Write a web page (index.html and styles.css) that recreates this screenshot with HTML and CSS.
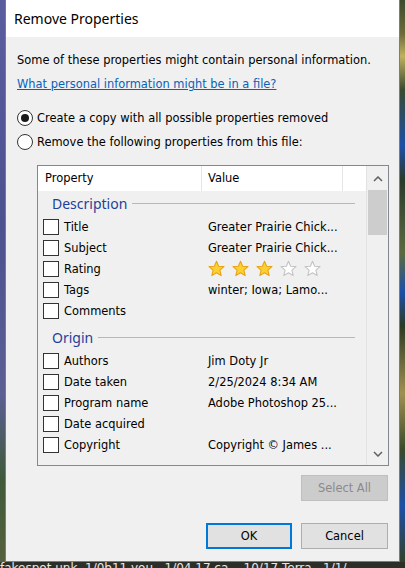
FILE: index.html
```html
<!DOCTYPE html>
<html>
<head>
  <meta charset="UTF-8">
  <title>Remove Properties</title>
  <link rel="stylesheet" href="styles.css">
</head>
<body>
  <div class="screen">
    <div class="edge-left"></div>
    <div class="dialog">
      <div class="titlebar">Remove Properties</div>
      <div class="content">
        <p class="intro">Some of these properties might contain personal information.</p>
        <a class="link" href="#">What personal information might be in a file?</a>

        <div class="options">
          <label class="radio"><span class="dot checked"></span>Create a copy with all possible properties removed</label>
          <label class="radio"><span class="dot"></span>Remove the following properties from this file:</label>
        </div>

        <div class="listbox">
          <div class="list-main">
            <div class="list-head">
              <div class="col-prop">Property</div>
              <div class="col-val">Value</div>
              <div class="col-end"></div>
            </div>
            <div class="list-body">
              <div class="group"><span>Description</span><i></i></div>
              <div class="row"><span class="box"></span><span class="name">Title</span><span class="val">Greater Prairie Chick...</span></div>
              <div class="row"><span class="box"></span><span class="name">Subject</span><span class="val">Greater Prairie Chick...</span></div>
              <div class="row"><span class="box"></span><span class="name">Rating</span>
                <span class="val stars">
                  <svg viewBox="0 0 20 20" class="star on"><polygon points="10,1.5 12.5,7.3 18.8,7.8 14,12 15.5,18.3 10,15 4.5,18.3 6,12 1.2,7.8 7.5,7.3"/></svg>
                  <svg viewBox="0 0 20 20" class="star on"><polygon points="10,1.5 12.5,7.3 18.8,7.8 14,12 15.5,18.3 10,15 4.5,18.3 6,12 1.2,7.8 7.5,7.3"/></svg>
                  <svg viewBox="0 0 20 20" class="star on"><polygon points="10,1.5 12.5,7.3 18.8,7.8 14,12 15.5,18.3 10,15 4.5,18.3 6,12 1.2,7.8 7.5,7.3"/></svg>
                  <svg viewBox="0 0 20 20" class="star"><polygon points="10,1.5 12.5,7.3 18.8,7.8 14,12 15.5,18.3 10,15 4.5,18.3 6,12 1.2,7.8 7.5,7.3"/></svg>
                  <svg viewBox="0 0 20 20" class="star"><polygon points="10,1.5 12.5,7.3 18.8,7.8 14,12 15.5,18.3 10,15 4.5,18.3 6,12 1.2,7.8 7.5,7.3"/></svg>
                </span>
              </div>
              <div class="row"><span class="box"></span><span class="name">Tags</span><span class="val">winter; Iowa; Lamo...</span></div>
              <div class="row"><span class="box"></span><span class="name">Comments</span><span class="val"></span></div>
              <div class="group gap"><span>Origin</span><i></i></div>
              <div class="row"><span class="box"></span><span class="name">Authors</span><span class="val">Jim Doty Jr</span></div>
              <div class="row"><span class="box"></span><span class="name">Date taken</span><span class="val">2/25/2024 8:34 AM</span></div>
              <div class="row"><span class="box"></span><span class="name">Program name</span><span class="val">Adobe Photoshop 25...</span></div>
              <div class="row"><span class="box"></span><span class="name">Date acquired</span><span class="val"></span></div>
              <div class="row"><span class="box"></span><span class="name">Copyright</span><span class="val">Copyright © James ...</span></div>
            </div>
          </div>
          <div class="scrollbar">
            <svg class="arrow" viewBox="0 0 10 6"><polyline points="1,5 5,1 9,5"/></svg>
            <div class="thumb"></div>
            <div class="track"></div>
            <svg class="arrow" viewBox="0 0 10 6"><polyline points="1,1 5,5 9,1"/></svg>
          </div>
        </div>

        <div class="btn-row">
          <button class="btn disabled">Select All</button>
        </div>
        <div class="btn-row bottom">
          <button class="btn default">OK</button>
          <button class="btn">Cancel</button>
        </div>
      </div>
    </div>
    <div class="edge-right"></div>
  </div>
  <div class="taskline">fakespot.unk&nbsp;&nbsp;1/0b11 you&nbsp;&nbsp;&nbsp;1/04 17 ca&nbsp;&nbsp;&nbsp;&nbsp;10/17 Terra&nbsp;&nbsp;&nbsp;1/1/</div>
</body>
</html>
```

FILE: styles.css
```css
body {
  margin: 0;
  width: 405px;
  height: 568px;
  overflow: hidden;
  background: #2b2d26;
  font-family: "DejaVu Sans", Tahoma, sans-serif;
  font-size: 11.45px;
  color: #000;
}

.screen { display: flex; height: 562px; }

.edge-left {
  width: 5px;
  background: linear-gradient(#5a5d9e, #4c5190 40%, #5b5f94 70%, #3f5a3a 85%, #55603e);
}
.edge-right {
  width: 5px;
  background: linear-gradient(#3c4a2c 0, #6c6a3a 6%, #c0b060 10%, #394a30 16%, #1d4fa6 26%, #2a3a2a 32%, #5c6a40 45%, #1d4fa6 52%, #2c3a24 58%, #a09050 70%, #3a4a2c 80%, #1d4fa6 90%, #34402a);
}

.dialog {
  width: 393px;
  border: 1px solid #7a7a8a;
  border-top: 0;
  display: flex;
  flex-direction: column;
  background: #f0f0f0;
}

.titlebar {
  height: 37px;
  background: #fff;
  padding-left: 8px;
  font-family: "Noto Sans", "Open Sans", sans-serif;
  font-size: 14px;
  line-height: 38px;
}

.content {
  flex: 1;
  padding: 15px 11px 0 11px;
}

.intro { margin: 0; line-height: 16px; }
.link {
  display: inline-block;
  margin-top: 8px;
  line-height: 16px;
  color: #0a62b8;
}

.options { margin-top: 14px; }
.radio {
  display: flex;
  align-items: center;
  height: 24px;
}
.dot {
  width: 14px;
  height: 14px;
  border: 1px solid #333;
  border-radius: 50%;
  background: #fff;
  margin-right: 4px;
  display: flex;
  align-items: center;
  justify-content: center;
}
.dot.checked::after {
  content: "";
  width: 8px;
  height: 8px;
  border-radius: 50%;
  background: #1a1a1a;
}

.listbox {
  margin: 11px 0 0 20px;
  width: 350px;
  height: 299px;
  border: 1px solid #828790;
  display: flex;
  background: #f0f0f0;
}
.list-main { flex: 1; overflow: hidden; }

.list-head {
  display: flex;
  height: 25px;
  background: #fff;
  line-height: 25px;
}
.col-prop { width: 156px; padding-left: 7px; border-right: 1px solid #e5e5e5; }
.col-val { width: 134px; padding-left: 6px; border-right: 1px solid #e5e5e5; }
.col-end { flex: 1; }

.list-body { padding-left: 5px; }

.group {
  display: flex;
  align-items: center;
  height: 25px;
  padding-left: 9px;
  color: #1e3f9a;
  font-family: "Noto Sans", "Open Sans", sans-serif;
  font-size: 14px;
}
.group i {
  flex: 1;
  height: 1px;
  background: #a9b8d4;
  margin: 0 11px 0 5px;
}
.group.gap { margin-top: 4px; }

.row {
  display: flex;
  align-items: center;
  height: 21px;
}
.box {
  width: 14px;
  height: 14px;
  border: 1px solid #333;
  background: #fff;
  margin-right: 5px;
}
.name { width: 144px; }
.val { white-space: nowrap; }

.stars { display: flex; gap: 7px; }
.star { width: 17px; height: 17px; }
.star polygon { fill: #fff; stroke: #c4c4c4; stroke-width: 1.3; stroke-linejoin: round; }
.star.on polygon { fill: #ffd12e; stroke: #e8a317; }

.scrollbar {
  width: 21px;
  border-left: 1px solid #e3e3e3;
  display: flex;
  flex-direction: column;
  align-items: center;
}
.arrow {
  width: 10px;
  height: 6px;
  margin: 10px 0 8px;
  flex-shrink: 0;
}
.arrow polyline { fill: none; stroke: #606060; stroke-width: 1.5; }
.thumb { width: 19px; height: 45px; background: #cdcdcd; }
.track { flex: 1; }

.btn-row {
  display: flex;
  justify-content: flex-end;
  gap: 9px;
  margin-top: 9px;
}
.btn-row.bottom { margin-top: 22px; }

.btn {
  width: 87px;
  height: 26px;
  border: 1px solid #adadad;
  background: #e1e1e1;
  font-family: "DejaVu Sans", Tahoma, sans-serif;
  font-size: 11.45px;
  color: #000;
  padding: 0;
}
.btn.default { border: 2px solid #0078d7; width: 86px; }
.btn.disabled { background: #cccccc; border-color: #bfbfbf; color: #8a8a8a; }

.taskline {
  height: 6px;
  overflow: hidden;
  background: #2c2f28;
  color: #e8e8e8;
  font-family: "DejaVu Sans", sans-serif;
  font-size: 12px;
  line-height: 12px;
  white-space: nowrap;
}
```
